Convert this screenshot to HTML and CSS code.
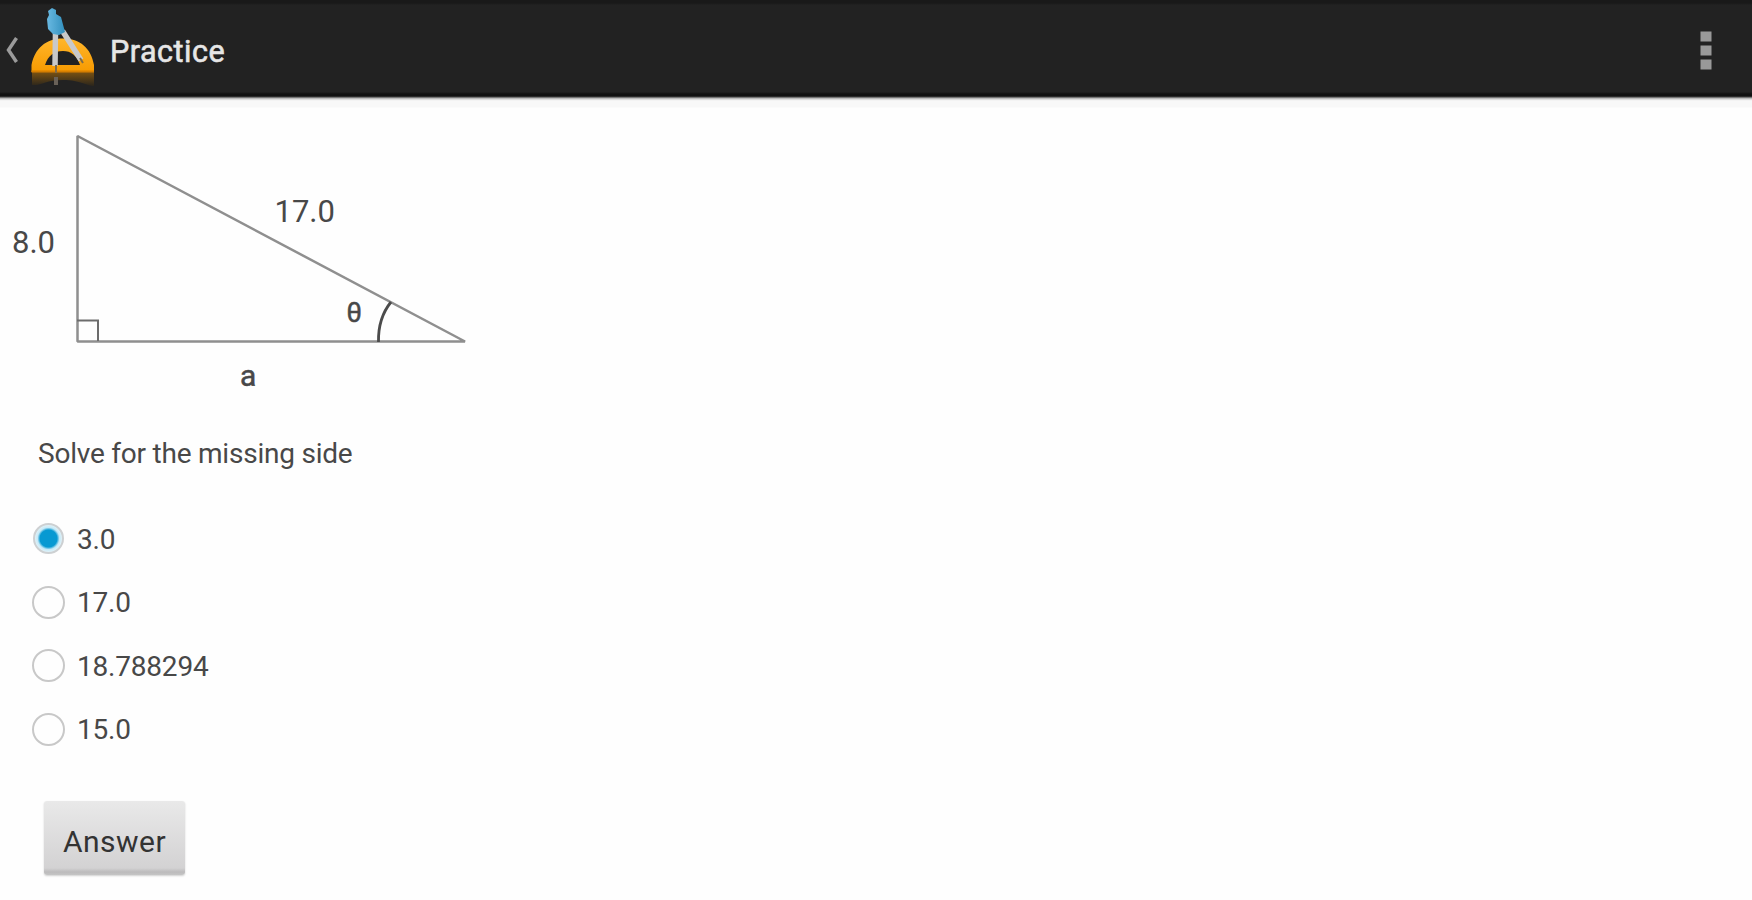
FILE: index.html
```html
<!DOCTYPE html>
<html lang="en">
<head>
<meta charset="utf-8">
<title>Practice</title>
<link rel="stylesheet" href="styles.css">
</head>
<body>
<header class="bar">
  <svg class="back" width="20" height="30" viewBox="0 0 20 30"><path d="M16.500 3L8.500 15L16.500 27" fill="none" stroke="#9b9b9b" stroke-width="3.500"/></svg>
  <svg class="logo" width="72" height="84" viewBox="0 0 72 84">
    <defs>
      <linearGradient id="gold" x1="0" y1="0" x2="0" y2="1"><stop offset="0" stop-color="#ffb62b"/><stop offset="1" stop-color="#f79a00"/></linearGradient>
      <linearGradient id="fade" x1="0" y1="0" x2="0" y2="1"><stop offset="0" stop-color="#7a5212"/><stop offset="1" stop-color="#2a251c"/></linearGradient>
      <linearGradient id="blue" x1="0" y1="0" x2="1" y2="0"><stop offset="0" stop-color="#69b9e2"/><stop offset="1" stop-color="#318fbd"/></linearGradient>
    </defs>
    <path d="M4 68H66V82C58 82 53 76 35 76C18 76 13 82 4 81Z" fill="url(#fade)"/>
    <path d="M3.500 68V61C7 44 18 34.500 35 34.500C52 34.500 63 44 66 61V68ZM17 61H52C49 51.500 43 47 35 47C26 47 20 51.500 17 61Z" fill="url(#gold)" fill-rule="evenodd"/>
    <path d="M3.500 67.500H66" stroke="#d77f00" stroke-width="2"/>
    <path d="M27.500 28L27 62M34.500 27L53 56" fill="none" stroke="#c9c9c9" stroke-width="5.500"/>
    <path d="M28 61V69M52 54L55 59" stroke="#7f6b48" stroke-width="2"/>
    <path d="M28 73V81" stroke="#696158" stroke-width="4"/>
    <path d="M20 7L24 4L28 6V10L33 13L37 28L31 31L25 30L20 25L19 15L21 11Z" fill="url(#blue)"/>
  </svg>
  <h1 class="title">Practice</h1>
  <svg class="more" width="12" height="40" viewBox="0 0 12 40"><path d="M0.500 0.500h11v10h-11zM0.500 14.500h11v10h-11zM0.500 28.500h11v10h-11z" fill="#999999"/></svg>
</header>
<main class="content">
  <svg class="triangle" width="480" height="293" viewBox="0 108 480 293">
    <path d="M77.500 341.500V136L465 341.500Z" fill="none" stroke="#8f8f8f" stroke-width="2.500" stroke-linejoin="bevel"/>
    <path d="M77 320.500H98V341" fill="none" stroke="#6c6c6c" stroke-width="2"/>
    <path d="M378.500 342Q378 318 391 302" fill="none" stroke="#4b4b4b" stroke-width="2.800"/>
    <text x="12" y="253">8.0</text>
    <text x="274.500" y="222">17.0</text>
    <text class="theta" x="346.500" y="321.500">θ</text>
    <text class="side" x="240" y="386">a</text>
  </svg>
  <p class="question">Solve for the missing side</p>
  <div class="options">
    <label class="option"><input class="radio" type="radio" name="answer" checked><span>3.0</span></label>
    <label class="option"><input class="radio" type="radio" name="answer"><span>17.0</span></label>
    <label class="option"><input class="radio" type="radio" name="answer"><span>18.788294</span></label>
    <label class="option"><input class="radio" type="radio" name="answer"><span>15.0</span></label>
  </div>
  <button class="submit" type="button">Answer</button>
</main>
</body>
</html>
```
FILE: styles.css
```css
* { box-sizing: border-box; }
body { margin: 0; height: 900px; overflow: hidden; background: #fefefe; color: #484848; font-family: Roboto, sans-serif; }
.bar { display: flex; align-items: flex-start; height: 108px; background: linear-gradient(#191919 0 3px, #222 5px 92px, #111 94px 96px, #444 97px, #aaa 98px, #eee 100px, #f8f8f8 101px 107px, #fefefe 108px); }
.back { margin-top: 35px; }
.logo { margin: 4px 0 0 8px; }
.title { margin: 34px auto 0 10px; font-size: 30.500px; line-height: 36px; font-weight: 400; letter-spacing: .5px; color: #e6e6e6; -webkit-text-stroke: .6px #e6e6e6; }
.more { margin: 31px 40px 0 0; }
.content { display: flex; flex-direction: column; align-items: flex-start; }
.triangle { display: block; font-size: 31px; fill: #484848; }
.theta { font-size: 27px; stroke: #484848; stroke-width: .5px; }
.side { font-size: 30px; stroke: #484848; stroke-width: .5px; }
.question { margin: 36px 0 0 38px; font-size: 28px; line-height: 34px; letter-spacing: -.22px; white-space: nowrap; }
.options { display: flex; flex-direction: column; margin: 37px 0 0 32px; }
.option { display: flex; align-items: center; gap: 12px; height: 63.500px; font-size: 28px; line-height: 34px; letter-spacing: -.2px; }
.radio { appearance: none; width: 33px; height: 33px; margin: 0 0 2px; border: 2px solid #c8c8c8; border-radius: 50%; background: #fefefe; }
.radio:checked { width: 31px; height: 31px; margin: 0 1px 2px; border-color: #cdd0d2; background: radial-gradient(circle, #0799d2 0 8.500px, #c5e9f7 11px, #e5f3f8 14px); }
.submit { width: 141px; height: 74px; margin: 39px 0 0 44px; padding: 8px 0 0; border: 0; border-radius: 3px; background: linear-gradient(#e9e9e9, #d3d2d3 67px, #bcbbbc 71px, #c5c5c5); box-shadow: 0 1px 2px #d0d0d0; color: #333; font: 30px/36px Roboto, sans-serif; letter-spacing: .5px; }
```
